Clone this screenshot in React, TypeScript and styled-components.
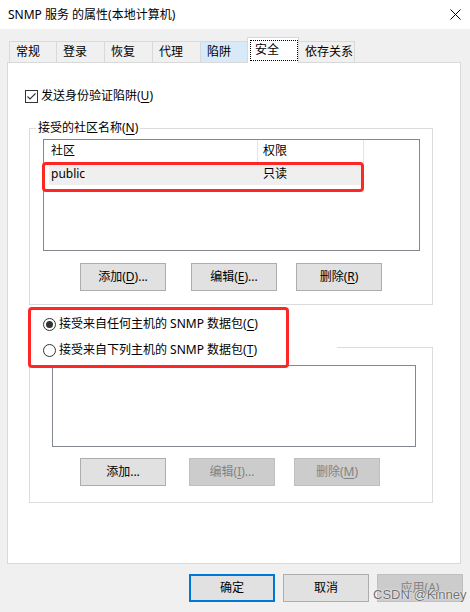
import React from 'react';
import styled, { createGlobalStyle } from 'styled-components';

const GlobalStyle = createGlobalStyle`
  html, body {
    margin: 0;
    padding: 0;
  }
  body {
    width: 470px;
    height: 612px;
    overflow: hidden;
    background: #f0f0f0;
    font-family: 'Noto Sans', 'Noto Sans CJK SC', sans-serif;
    font-size: 12px;
    color: #000;
  }
`;

const Window = styled.div`
  position: relative;
  width: 470px;
  height: 612px;
  display: flex;
  flex-direction: column;
  background: #f0f0f0;
`;

const TitleBar = styled.div`
  box-sizing: border-box;
  height: 29px;
  flex: 0 0 29px;
  background: #fff;
  display: flex;
  align-items: center;
  justify-content: space-between;
  padding: 0 9px 0 8px;
  line-height: 16px;
`;

const Body = styled.div`
  padding: 8px 0 0 7px;
`;

const TabRow = styled.div`
  position: relative;
  z-index: 1;
  display: flex;
  align-items: flex-end;
  height: 25px;
  padding-left: 2px;
`;

const Tab = styled.div<{ $w: number; $active?: boolean; $hover?: boolean }>`
  box-sizing: border-box;
  width: ${p => p.$w}px;
  height: ${p => (p.$active ? 26 : 21)}px;
  margin-left: -1px;
  margin-bottom: ${p => (p.$active ? -1 : 0)}px;
  border: 1px solid #d9d9d9;
  border-bottom: none;
  background: ${p => (p.$active ? '#fff' : p.$hover ? '#d8e9f8' : '#f0f0f0')};
  position: relative;
  z-index: ${p => (p.$active ? 2 : 1)};
  padding: ${p => (p.$active ? '2px 0 0 2px' : '2px 0 0 6px')};
  line-height: 16px;
  white-space: nowrap;

  &:first-child {
    margin-left: 0;
  }
`;

const FocusRect = styled.div`
  box-sizing: border-box;
  width: 48px;
  height: 21px;
  border: 1px dotted #000;
  padding-left: 4px;
  line-height: 18px;
`;

const Panel = styled.div`
  box-sizing: border-box;
  width: 454px;
  height: 502px;
  border: 1px solid #d9d9d9;
  background: #fff;
  padding-top: 25px;
  display: flex;
  flex-direction: column;
  align-items: flex-start;
`;

const OptionRow = styled.div<{ $ml: number; $mt?: number }>`
  display: flex;
  align-items: center;
  gap: 3px;
  height: 16px;
  line-height: 16px;
  margin-left: ${p => p.$ml}px;
  margin-top: ${p => p.$mt ?? 0}px;
  white-space: nowrap;
`;

const Key = styled.span`
  text-decoration: underline;
  text-underline-offset: 2px;
`;

const GroupBox = styled.fieldset<{ $mt: number }>`
  box-sizing: border-box;
  width: 404px;
  min-inline-size: 0;
  margin: ${p => p.$mt}px 0 0 21px;
  padding: 0;
  border: 1px solid #dcdcdc;
`;

const GroupLegend = styled.legend`
  margin-left: 6px;
  padding: 0 2px;
  line-height: 16px;
  height: 16px;
`;

const RadioLegend = styled.legend`
  box-sizing: border-box;
  width: 307px;
  margin-left: 0;
  padding: 6px 0 0 13px;
  height: 22px;
`;

const GroupInner = styled.div<{ $pad: string }>`
  padding: ${p => p.$pad};
`;

const ListBox = styled.div<{ $w: number; $h: number }>`
  box-sizing: border-box;
  width: ${p => p.$w}px;
  height: ${p => p.$h}px;
  border: 1px solid #828790;
  background: #fff;
`;

const ListHeader = styled.div`
  display: flex;
  height: 23px;
`;

const HeaderCell = styled.div<{ $w: number; $pl: number }>`
  box-sizing: border-box;
  width: ${p => p.$w}px;
  padding-left: ${p => p.$pl}px;
  border-right: 1px solid #e5e5e5;
  line-height: 22px;
`;

const ListRow = styled.div`
  position: relative;
  display: flex;
  width: 313px;
  height: 22px;
  margin-left: 5px;
  background: #efefef;
  line-height: 22px;

  &::after {
    content: '';
    position: absolute;
    left: -7px;
    top: -1px;
    width: 322px;
    height: 30px;
    box-sizing: border-box;
    border: 3px solid #ff2626;
    border-radius: 4px;
  }
`;

const RowCell = styled.div<{ $w?: number; $pl: number }>`
  box-sizing: border-box;
  width: ${p => (p.$w ? `${p.$w}px` : 'auto')};
  padding-left: ${p => p.$pl}px;
`;

const ButtonRow = styled.div<{ $mt: number; $pl: number }>`
  display: flex;
  margin-top: ${p => p.$mt}px;
  padding-left: ${p => p.$pl}px;
`;

const Button = styled.button<{ $disabled?: boolean; $primary?: boolean; $ml?: number }>`
  box-sizing: border-box;
  width: 86px;
  height: 28px;
  margin: 0 0 0 ${p => p.$ml ?? 0}px;
  padding: 0;
  display: flex;
  align-items: center;
  justify-content: center;
  font: inherit;
  line-height: 16px;
  background: ${p => (p.$disabled ? '#cccccc' : '#e1e1e1')};
  border: ${p => (p.$primary ? '2px solid #0078d7' : `1px solid ${p.$disabled ? '#bfbfbf' : '#adadad'}`)};
  color: ${p => (p.$disabled ? '#838383' : '#000')};
  white-space: nowrap;
`;

const HostSection = styled.div`
  position: relative;
  display: flex;
  flex-direction: column;
  align-items: flex-start;
`;

const RedMark = styled.div`
  position: absolute;
  left: 20px;
  top: 2px;
  width: 261px;
  height: 61px;
  box-sizing: border-box;
  border: 3px solid #ff2626;
  border-radius: 4px;
  pointer-events: none;
`;

const Footer = styled.div`
  display: flex;
  justify-content: flex-end;
  gap: 8px;
  margin-top: 10px;
  padding-right: 7px;
`;

const Watermark = styled.div`
  position: absolute;
  left: 373px;
  top: 587px;
  font-family: 'Liberation Sans', Arial, sans-serif;
  font-size: 13px;
  line-height: 16px;
  color: #707070;
  text-shadow: 0 0 2px #fff, 0 0 1px #fff;
`;

const CheckIcon = () => (
  <svg width="13" height="13" viewBox="0 0 13 13">
    <rect x="0.5" y="0.5" width="12" height="12" fill="#fff" stroke="#333" />
    <path d="M2.5 6.5 L5 9 L10.5 3.5" fill="none" stroke="#333" strokeWidth="1.1" />
  </svg>
);

const RadioIcon: React.FC<{ checked?: boolean }> = ({ checked }) => (
  <svg width="13" height="13" viewBox="0 0 13 13">
    <circle cx="6.5" cy="6.5" r="6" fill="#fff" stroke="#333" />
    {checked && <circle cx="6.5" cy="6.5" r="3.5" fill="#333" />}
  </svg>
);

const CloseIcon = () => (
  <svg width="11" height="11" viewBox="0 0 11 11">
    <path d="M0.5 0.5 L10.5 10.5 M10.5 0.5 L0.5 10.5" stroke="#000" strokeWidth="1" />
  </svg>
);

const tabs = [
  { label: '常规', w: 48 },
  { label: '登录', w: 49 },
  { label: '恢复', w: 49 },
  { label: '代理', w: 49 },
  { label: '陷阱', w: 48, hover: true },
  { label: '安全', w: 52, active: true },
  { label: '依存关系', w: 57 },
];

export default function App() {
  return (
    <Window>
      <GlobalStyle />
      <TitleBar>
        <span>SNMP 服务 的属性(本地计算机)</span>
        <CloseIcon />
      </TitleBar>
      <Body>
        <TabRow>
          {tabs.map(t => (
            <Tab key={t.label} $w={t.w} $active={t.active} $hover={t.hover}>
              {t.active ? <FocusRect>{t.label}</FocusRect> : t.label}
            </Tab>
          ))}
        </TabRow>
        <Panel>
          <OptionRow $ml={17}>
            <CheckIcon />
            <span>发送身份验证陷阱(<Key>U</Key>)</span>
          </OptionRow>

          <GroupBox $mt={16}>
            <GroupLegend>接受的社区名称(<Key>N</Key>)</GroupLegend>
            <GroupInner $pad="3px 12px 13px 13px">
              <ListBox $w={377} $h={112}>
                <ListHeader>
                  <HeaderCell $w={214} $pl={7}>社区</HeaderCell>
                  <HeaderCell $w={106} $pl={5}>权限</HeaderCell>
                </ListHeader>
                <ListRow>
                  <RowCell $w={208} $pl={2}>public</RowCell>
                  <RowCell $pl={6}>只读</RowCell>
                </ListRow>
              </ListBox>
              <ButtonRow $mt={12} $pl={37}>
                <Button>添加(<Key>D</Key>)...</Button>
                <Button $ml={25}>编辑(<Key>E</Key>)...</Button>
                <Button $ml={19}>删除(<Key>R</Key>)</Button>
              </ButtonRow>
            </GroupInner>
          </GroupBox>

          <HostSection>
            <OptionRow $ml={35} $mt={11}>
              <RadioIcon checked />
              <span>接受来自任何主机的 SNMP 数据包(<Key>C</Key>)</span>
            </OptionRow>
            <GroupBox $mt={4}>
              <RadioLegend>
                <OptionRow $ml={0}>
                  <RadioIcon />
                  <span>接受来自下列主机的 SNMP 数据包(<Key>T</Key>)</span>
                </OptionRow>
              </RadioLegend>
              <GroupInner $pad="7px 17px 16px 22px">
                <ListBox $w={364} $h={82} />
                <ButtonRow $mt={11} $pl={28}>
                  <Button>添加...</Button>
                  <Button $ml={23} $disabled>编辑(<Key>I</Key>)...</Button>
                  <Button $ml={19} $disabled>删除(<Key>M</Key>)</Button>
                </ButtonRow>
              </GroupInner>
            </GroupBox>
            <RedMark />
          </HostSection>
        </Panel>
      </Body>
      <Footer>
        <Button $primary>确定</Button>
        <Button>取消</Button>
        <Button $disabled>应用(<Key>A</Key>)</Button>
      </Footer>
      <Watermark>CSDN @Kinney</Watermark>
    </Window>
  );
}
